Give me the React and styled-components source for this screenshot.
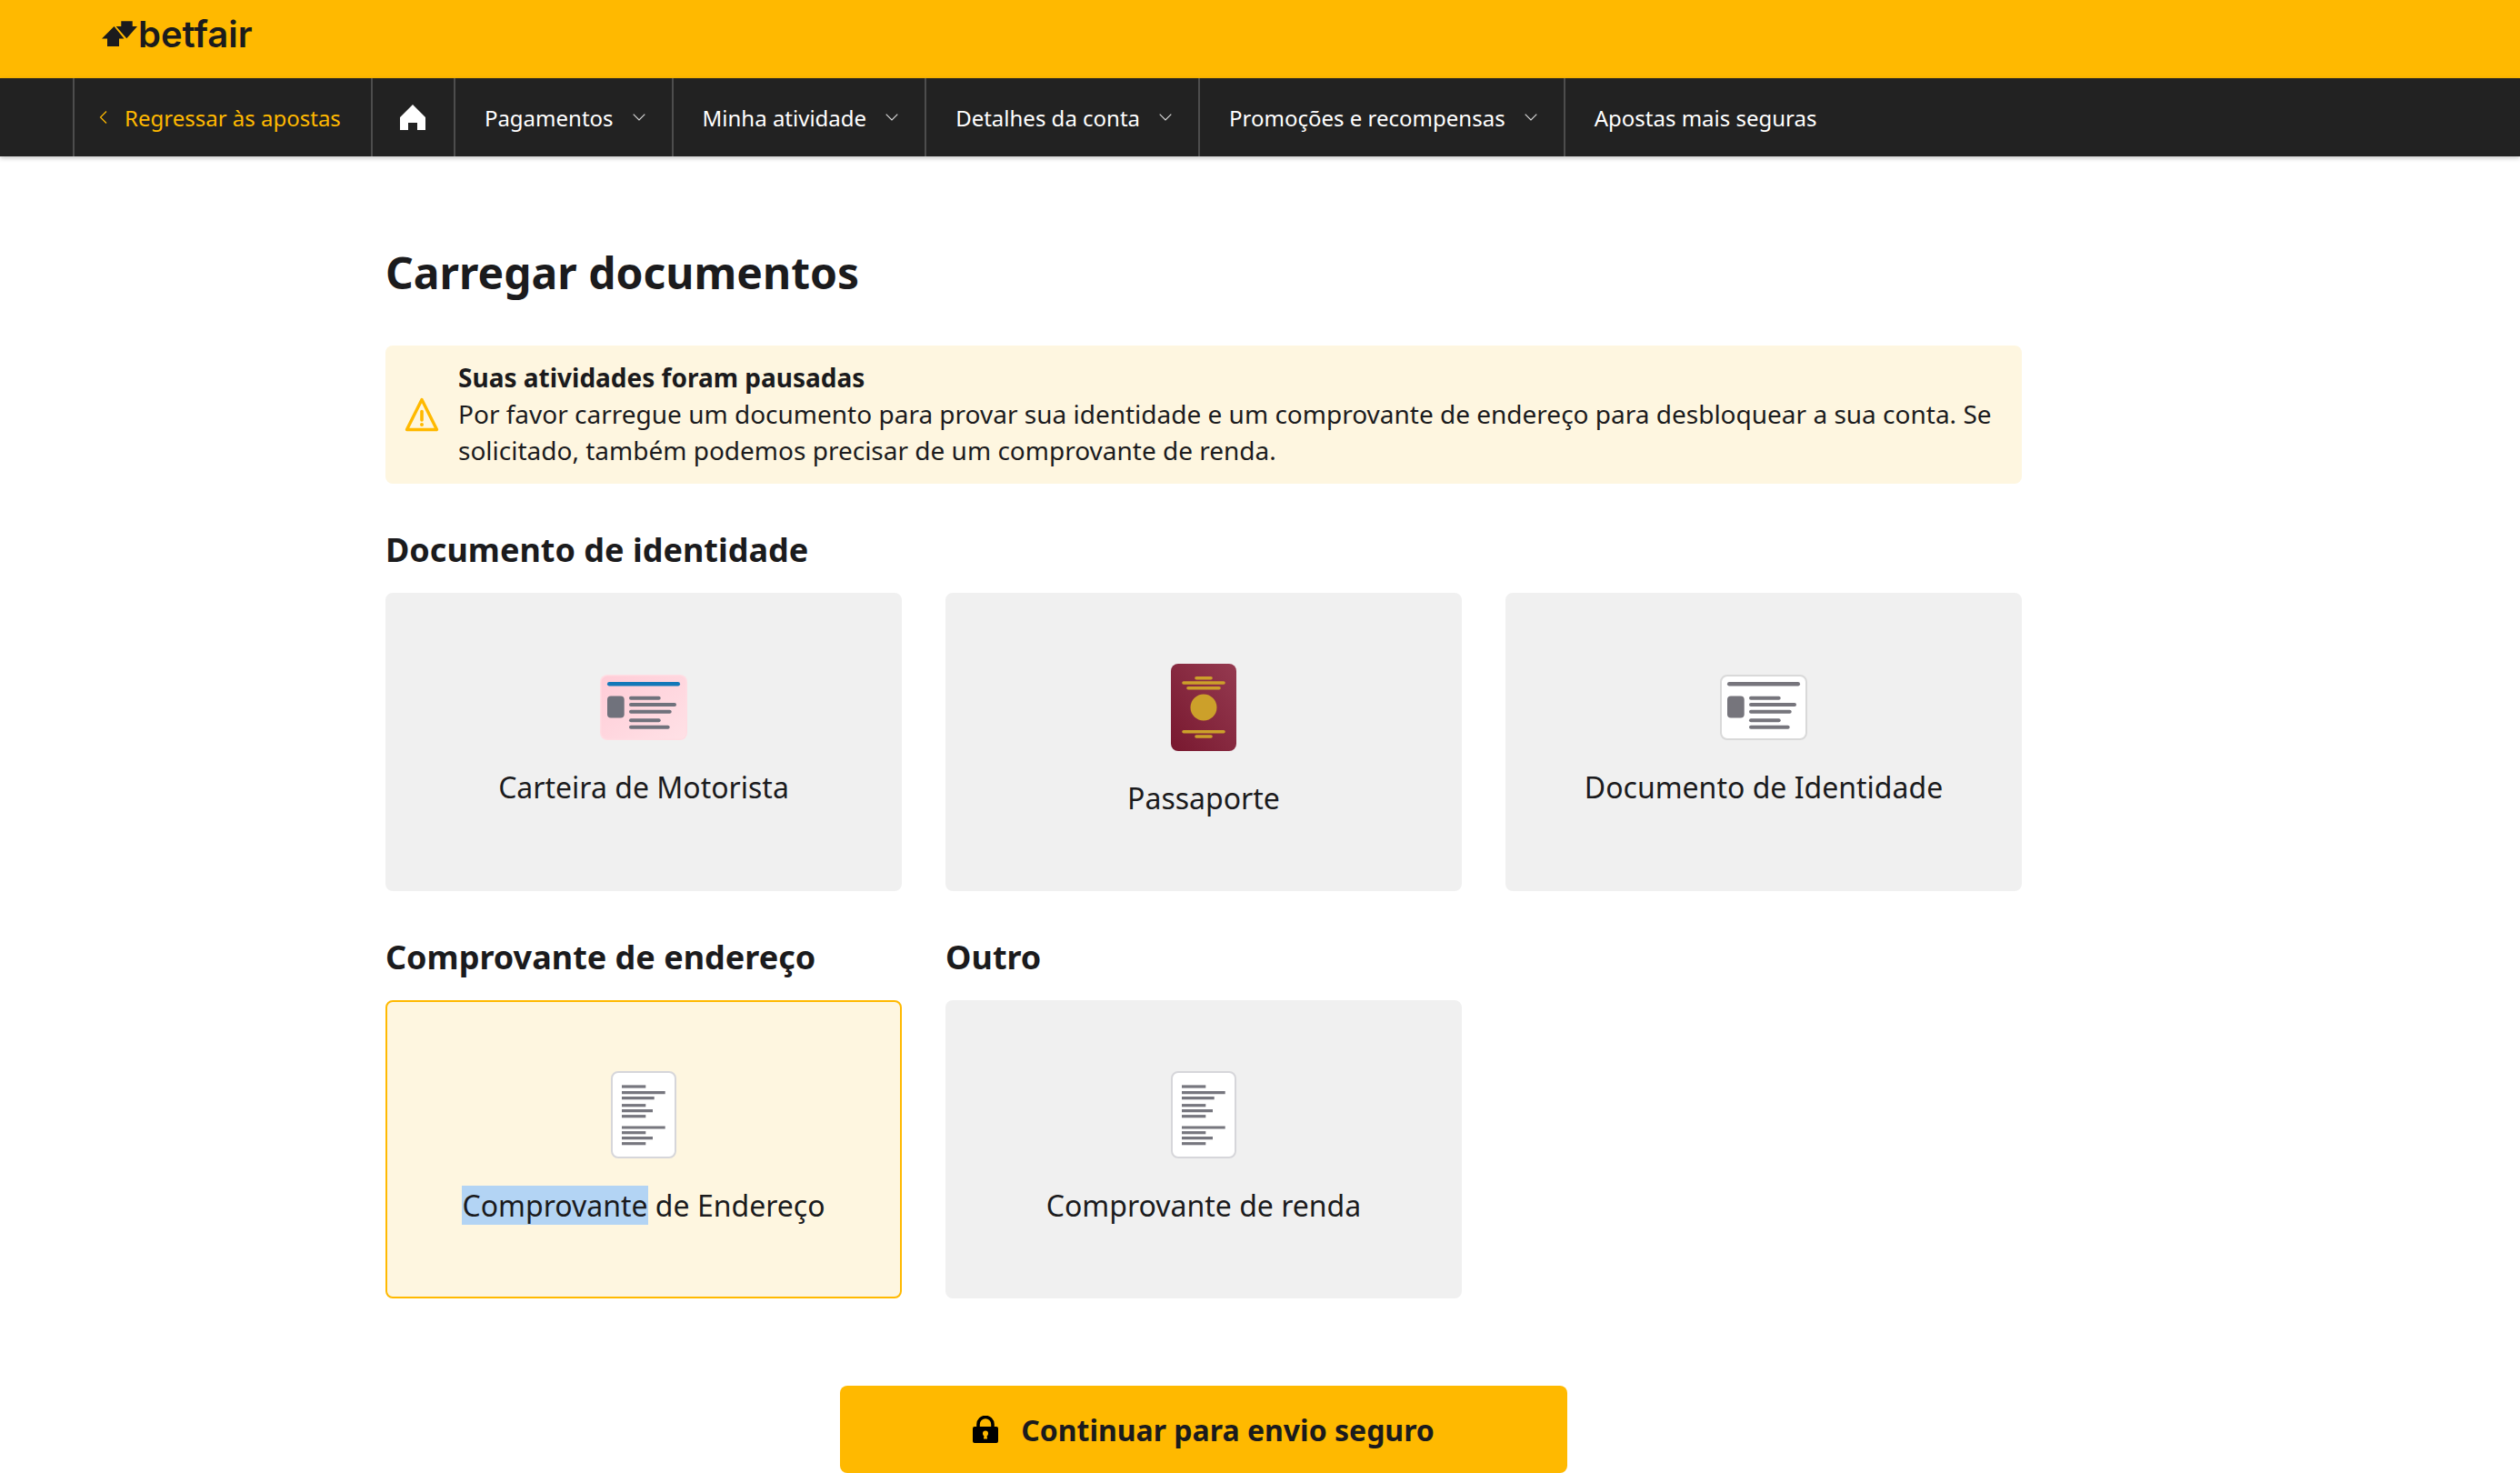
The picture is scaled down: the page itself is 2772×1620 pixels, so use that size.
import React from "react";
import styled, { createGlobalStyle } from "styled-components";

const GlobalStyle = createGlobalStyle`
  html, body {
    margin: 0;
    padding: 0;
    background: #fff;
    font-family: "Noto Sans", sans-serif;
    color: #1b1b1d;
  }
  * { box-sizing: border-box; }
`;

// small drawings
function Chevron() {
  return (
    <svg width="14" height="8" viewBox="0 0 14 8" fill="none">
      <path d="M.7.7 7 7l6.3-6.3" stroke="#ddd" strokeWidth="1.1" />
    </svg>
  );
}

function BackChevron() {
  return (
    <svg width="10" height="14" viewBox="0 0 10 14" fill="none">
      <path d="M8 .5 1.5 7 8 13.5" stroke="#ffb900" strokeWidth="1.2" />
    </svg>
  );
}

function HomeIcon() {
  return (
    <svg width="28" height="28" viewBox="0 0 28 28" fill="#fff">
      <path d="M14 0 28 14V28H19V20H9V28H0V14Z" />
    </svg>
  );
}

function LogoMark() {
  return (
    <svg width="40" height="28" viewBox="0 0 40 28" fill="#1b1b1d">
      <path d="M13.5 6 24.5 19.5H19V28H6V19.5H0Z" />
      <path d="M21.3.3H33.7V6H39L27.3 19.3 15.7 6H21.3Z" />
    </svg>
  );
}

function WarningIcon() {
  return (
    <svg width="38" height="38" viewBox="0 0 38 38" fill="none">
      <path d="M19 2.5 35.5 35.5H2.5Z" stroke="#ffb900" strokeWidth="3.4" strokeLinejoin="round" />
      <path d="M19 15.5V25" stroke="#ffb900" strokeWidth="3.6" strokeLinecap="round" />
      <circle cx="19" cy="30" r="2" fill="#ffb900" />
    </svg>
  );
}

function LockIcon() {
  return (
    <svg width="28" height="30" viewBox="0 0 28 30" fill="none">
      <path d="M6 13V9.5a8 8 0 0 1 16 0V13" stroke="#000" strokeWidth="3.6" />
      <rect x="0" y="12" width="28" height="18" rx="2" fill="#000" />
      <circle cx="14" cy="19.5" r="3" fill="#ffb900" />
      <path d="M12.7 20h2.6l.7 5.5h-4Z" fill="#ffb900" />
    </svg>
  );
}

function CardLines({ color }) {
  const lines = [
    [25.7, 66.7],
    [33, 84],
    [40.7, 78.7],
    [50.3, 66.7],
    [57.7, 76.7],
  ];
  return (
    <g stroke={color} strokeWidth="4" strokeLinecap="round">
      {lines.map(([y, end]) => (
        <path key={y} d={`M34 ${y}H${end - 2}`} />
      ))}
    </g>
  );
}

function LicenseIcon() {
  return (
    <svg width="96" height="72" viewBox="0 0 96 72">
      <defs>
        <linearGradient id="licenseFill" x1="0" y1="0" x2="1" y2="1">
          <stop offset="0" stopColor="#ffccd7" />
          <stop offset="1" stopColor="#ffe1e6" />
        </linearGradient>
      </defs>
      <rect x="0" y="0" width="96" height="72" rx="8" fill="#ffdde3" />
      <rect x="1.5" y="1.5" width="93" height="69" rx="6.5" fill="url(#licenseFill)" />
      <rect x="8" y="8" width="80" height="4.4" rx="2.2" fill="#1478b8" />
      <rect x="8" y="23.5" width="18.7" height="24" rx="4" fill="#70727c" />
      <CardLines color="#70727c" />
    </svg>
  );
}

function IdCardIcon() {
  return (
    <svg width="96" height="72" viewBox="0 0 96 72">
      <rect x="1" y="1" width="94" height="70" rx="7" fill="#fff" stroke="#d9d9d9" strokeWidth="2" />
      <rect x="8" y="8" width="80" height="4.4" rx="2.2" fill="#76757c" />
      <rect x="8" y="23.5" width="18.7" height="24" rx="4" fill="#76757c" />
      <CardLines color="#76757c" />
    </svg>
  );
}

function PassportIcon() {
  const gold = "#cca02a";
  return (
    <svg width="72" height="96" viewBox="0 0 72 96">
      <defs>
        <linearGradient id="passportFill" x1="0" y1="1" x2="1" y2="0">
          <stop offset="0" stopColor="#78182f" />
          <stop offset="1" stopColor="#953a50" />
        </linearGradient>
      </defs>
      <rect x="0" y="0" width="72" height="96" rx="8" fill="url(#passportFill)" />
      <g stroke={gold} strokeWidth="3.6" strokeLinecap="round">
        <path d="M28 15.7H44" />
        <path d="M14 21H58" />
        <path d="M19 26.7H53" />
        <path d="M14 74.7H58" />
        <path d="M28 80H44" />
      </g>
      <circle cx="36" cy="48" r="14.5" fill={gold} />
    </svg>
  );
}

function DocumentIcon() {
  const lines = [
    [17, 38.3],
    [23.7, 59.7],
    [29.7, 47.7],
    [37.7, 38.3],
    [43.7, 46],
    [49.7, 38.3],
    [62, 59.7],
    [67.7, 38.3],
    [73.7, 46],
    [79.7, 38.3],
  ];
  return (
    <svg width="72" height="96" viewBox="0 0 72 96">
      <rect x="1" y="1" width="70" height="94" rx="7" fill="#fff" stroke="#d6d6da" strokeWidth="2" />
      <g stroke="#76767e" strokeWidth="3.2">
        {lines.map(([y, end]) => (
          <path key={y} d={`M12 ${y}H${end}`} />
        ))}
      </g>
    </svg>
  );
}

function App() {
  return (
    <Page>
      <GlobalStyle />
      <Brand>
        <LogoMark />
        <Wordmark>betfair</Wordmark>
      </Brand>
      <Nav>
        <BackItem>
          <BackChevron />
          Regressar às apostas
        </BackItem>
        <HomeItem>
          <HomeIcon />
        </HomeItem>
        <NavItem>Pagamentos <Chevron /></NavItem>
        <NavItem>Minha atividade <Chevron /></NavItem>
        <NavItem>Detalhes da conta <Chevron /></NavItem>
        <NavItem>Promoções e recompensas <Chevron /></NavItem>
        <NavItem>Apostas mais seguras</NavItem>
      </Nav>
      <Main>
        <Title>Carregar documentos</Title>
        <Alert>
          <AlertIcon>
            <WarningIcon />
          </AlertIcon>
          <AlertText>
            <strong>Suas atividades foram pausadas</strong>
            <br />
            Por favor carregue um documento para provar sua identidade e um comprovante de
            endereço para desbloquear a sua conta. Se solicitado, também podemos precisar de
            um comprovante de renda.
          </AlertText>
        </Alert>
        <SectionHeading>Documento de identidade</SectionHeading>
        <CardGrid>
          <Card>
            <LicenseIcon />
            <CardLabel>Carteira de Motorista</CardLabel>
          </Card>
          <Card>
            <PassportIcon />
            <CardLabel>Passaporte</CardLabel>
          </Card>
          <Card>
            <IdCardIcon />
            <CardLabel>Documento de Identidade</CardLabel>
          </Card>
          <Column>
            <SectionHeading>Comprovante de endereço</SectionHeading>
            <Card $selected>
              <DocumentIcon />
              <CardLabel>
                <Highlight>Comprovante</Highlight> de Endereço
              </CardLabel>
            </Card>
          </Column>
          <Column>
            <SectionHeading>Outro</SectionHeading>
            <Card>
              <DocumentIcon />
              <CardLabel>Comprovante de renda</CardLabel>
            </Card>
          </Column>
        </CardGrid>
        <SubmitButton>
          <LockIcon />
          Continuar para envio seguro
        </SubmitButton>
      </Main>
    </Page>
  );
}

export default App;

const Page = styled.div`
  width: 2772px;
  height: 1620px;
  overflow: hidden;
`;

const Brand = styled.div`
  height: 86px;
  background: #ffb900;
  padding: 23px 0 0 112px;
  display: flex;
  align-items: flex-start;
  gap: 0;
`;

const Wordmark = styled.span`
  font-family: Inter, sans-serif;
  font-size: 40px;
  font-weight: 600;
  line-height: 30px;
  color: #1b1b1d;
`;

const Nav = styled.nav`
  position: relative;
  height: 86px;
  background: #222;
  display: flex;
  padding-left: 80px;
  box-shadow: 0 2px 5px rgba(0, 0, 0, 0.22);
`;

const NavItem = styled.div`
  display: flex;
  align-items: center;
  gap: 21px;
  padding: 0 29px 0 32px;
  font-size: 24px;
  color: #fff;
  border-left: 2px solid #4d4d4d;
`;

const BackItem = styled(NavItem)`
  gap: 18px;
  padding: 0 33px 0 27px;
  color: #ffb900;
`;

const HomeItem = styled(NavItem)`
  padding: 0 31px 0 30px;
`;

const Main = styled.main`
  width: 1800px;
  margin-left: 424px;
  padding-top: 96px;
`;

const Title = styled.h1`
  margin: 0 0 48px;
  font-size: 48px;
  line-height: 64px;
  font-weight: 700;
`;

const Alert = styled.div`
  display: flex;
  align-items: center;
  gap: 21px;
  padding: 15px 24px 17px 21px;
  margin-bottom: 48px;
  background: #fef6e0;
  border-radius: 8px;
`;

const AlertIcon = styled.div`
  flex: 0 0 38px;
  height: 38px;
  margin-top: 2px;
`;

const AlertText = styled.p`
  margin: 0;
  font-size: 28px;
  line-height: 40px;
`;

const SectionHeading = styled.h2`
  margin: 0 0 23px;
  padding-top: 1px;
  font-size: 36px;
  line-height: 48px;
  font-weight: 700;
`;

const CardGrid = styled.div`
  display: grid;
  grid-template-columns: repeat(3, 568px);
  column-gap: 48px;
  row-gap: 48px;
  margin-bottom: 96px;
`;

const Column = styled.div`
  display: flex;
  flex-direction: column;
`;

const Card = styled.div`
  height: 328px;
  padding-bottom: 2px;
  display: flex;
  flex-direction: column;
  align-items: center;
  justify-content: center;
  gap: 30px;
  background: ${(p) => (p.$selected ? "#fef6e0" : "#f0f0f0")};
  border: 2px solid ${(p) => (p.$selected ? "#ffb900" : "#f0f0f0")};
  border-radius: 8px;
`;

const CardLabel = styled.div`
  font-size: 32px;
  line-height: 44px;
`;

const Highlight = styled.span`
  background: #b3d4f4;
`;

const SubmitButton = styled.button`
  display: flex;
  align-items: center;
  justify-content: center;
  gap: 25px;
  width: 800px;
  height: 96px;
  margin: 0 auto;
  padding: 0;
  border: 0;
  border-radius: 8px;
  background: #ffb900;
  color: #1b1b1d;
  font-family: "Noto Sans", sans-serif;
  font-size: 32px;
  font-weight: 700;
`;
